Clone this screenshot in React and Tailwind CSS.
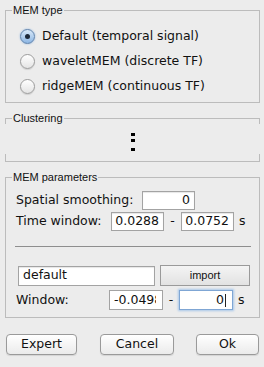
import { useState } from 'react';

const main = { fontFamily: '"DejaVu Sans", "Liberation Sans", sans-serif' };
const small = { fontFamily: '"Liberation Sans", Arial, sans-serif' };

// Group box title, sits on the top border
function Title({ children }) {
  return (
    <div
      className="-mt-[7px] ml-[6px] w-fit bg-[#ececec] px-px text-[11px] leading-[13px] text-[#111]"
      style={small}
    >
      {children}
    </div>
  );
}

function Radio({ checked, label, onClick }) {
  return (
    <div className="flex h-[25px] items-center gap-[7px] cursor-default" onClick={onClick}>
      {checked ? (
        <div className="flex h-[15px] w-[15px] items-center justify-center rounded-full border border-[#5f83ad] bg-gradient-to-b from-[#d9e9f8] to-[#8db6e3] shadow-[0_0_2px_#8fb4e0]">
          <div className="h-[5px] w-[5px] rounded-full bg-[#1c2838]" />
        </div>
      ) : (
        <div className="h-[15px] w-[15px] rounded-full border border-[#9c9c9c] bg-gradient-to-b from-white to-[#e4e4e4] shadow-[0_1px_1px_rgba(0,0,0,0.12)]" />
      )}
      <span className="text-[12.5px] leading-none text-[#111]">{label}</span>
    </div>
  );
}

function Field({ value, className = '', align = 'right' }) {
  return (
    <div
      className={`flex items-center border border-[#a3a3a3] bg-white text-[12.5px] text-[#111] shadow-[inset_0_1px_1px_rgba(0,0,0,0.1)] ${
        align === 'right' ? 'justify-end pr-[4px]' : 'pl-[4px]'
      } ${className}`}
    >
      {value}
    </div>
  );
}

function Button({ children, className = '' }) {
  return (
    <button
      className={`flex h-[21px] items-center justify-center rounded-[4px] border border-[#9a9a9a] bg-gradient-to-b from-white to-[#ebebeb] text-[12.5px] text-[#111] shadow-[0_1px_1px_rgba(0,0,0,0.1)] ${className}`}
    >
      {children}
    </button>
  );
}

export default function App() {
  const [type, setType] = useState(0);
  const types = ['Default (temporal signal)', 'waveletMEM (discrete TF)', 'ridgeMEM (continuous TF)'];

  return (
    <div className="h-[367px] w-[264px] overflow-hidden bg-[#ececec]" style={main}>
      <div className="ml-[5px] w-[255px]">
        {/* MEM type */}
        <div className="mt-[10px] border border-[#bcbcbc]">
          <Title>MEM type</Title>
          <div className="pl-[14px] pt-[7px] pb-[3px]">
            {types.map((t, i) => (
              <Radio key={t} label={t} checked={type === i} onClick={() => setType(i)} />
            ))}
          </div>
        </div>

        {/* Clustering */}
        <div className="mt-[15px] border-y border-[#bcbcbc]">
          <div className="flow-root h-[5px] border-x border-[#bcbcbc]">
            <Title>Clustering</Title>
          </div>
          <div className="flex h-[30px] flex-col items-center gap-[3px] pt-[9px]">
            <div className="h-[3px] w-[4px] bg-black" />
            <div className="h-[3px] w-[4px] bg-black" />
            <div className="mt-[3px] h-[3px] w-[4px] bg-black" />
          </div>
          <div className="h-[7px] border-x border-[#bcbcbc]" />
        </div>

        {/* MEM parameters */}
        <div className="mt-[15px] border border-[#bcbcbc] pb-[7px]">
          <Title>MEM parameters</Title>
          <div className="mt-[7px] flex h-[19px] items-center pl-[10px]">
            <span className="w-[126px] text-[12.5px] text-[#111]">Spatial smoothing:</span>
            <Field value="0" className="h-[19px] w-[53px]" />
          </div>
          <div className="mt-[2px] flex h-[19px] items-center pl-[10px]">
            <span className="w-[95px] text-[12.5px] text-[#111]">Time window:</span>
            <Field value="0.0288" className="h-[19px] w-[53px]" />
            <span className="w-[17px] text-center text-[12.5px] text-[#111]">-</span>
            <Field value="0.0752" className="h-[19px] w-[53px]" />
            <span className="ml-[5px] text-[12.5px] text-[#111]">s</span>
          </div>
          <div className="ml-[9px] mr-[8px] mt-[15px] h-px bg-[#8e8e8e]" />
          <div className="mt-[18px] flex items-center pl-[12px]">
            <Field value="default" align="left" className="h-[20px] w-[137px]" />
            <button
              className="ml-[5px] h-[21px] w-[90px] border border-[#9a9a9a] bg-gradient-to-b from-[#f4f4f4] to-[#e2e2e2] text-[11px] text-[#111]"
              style={small}
            >
              import
            </button>
          </div>
          <div className="mt-[4px] flex h-[20px] items-center pl-[10px]">
            <span className="w-[93px] text-[12.5px] text-[#111]">Window:</span>
            <div className="flex h-[20px] w-[54px] items-center border border-[#a3a3a3] bg-white pl-[4px] text-[12.5px] text-[#111]">
              <span className="w-[42px] overflow-hidden whitespace-nowrap">-0.0498</span>
            </div>
            <span className="w-[16px] text-center text-[12.5px] text-[#111]">-</span>
            <div className="flex h-[20px] w-[54px] items-center justify-end border border-[#7fa6d4] bg-white pr-[6px] text-[12.5px] text-[#111] shadow-[0_0_2px_1px_#a9c8ea]">
              0<span className="ml-px h-[13px] w-px bg-[#222]" />
            </div>
            <span className="ml-[5px] text-[12.5px] text-[#111]">s</span>
          </div>
        </div>
      </div>

      {/* Footer buttons */}
      <div className="mt-[16px] flex pl-[6px]">
        <Button className="w-[71px]">Expert</Button>
        <Button className="ml-[23px] w-[74px]">Cancel</Button>
        <Button className="ml-[22px] w-[63px]">Ok</Button>
      </div>
    </div>
  );
}
